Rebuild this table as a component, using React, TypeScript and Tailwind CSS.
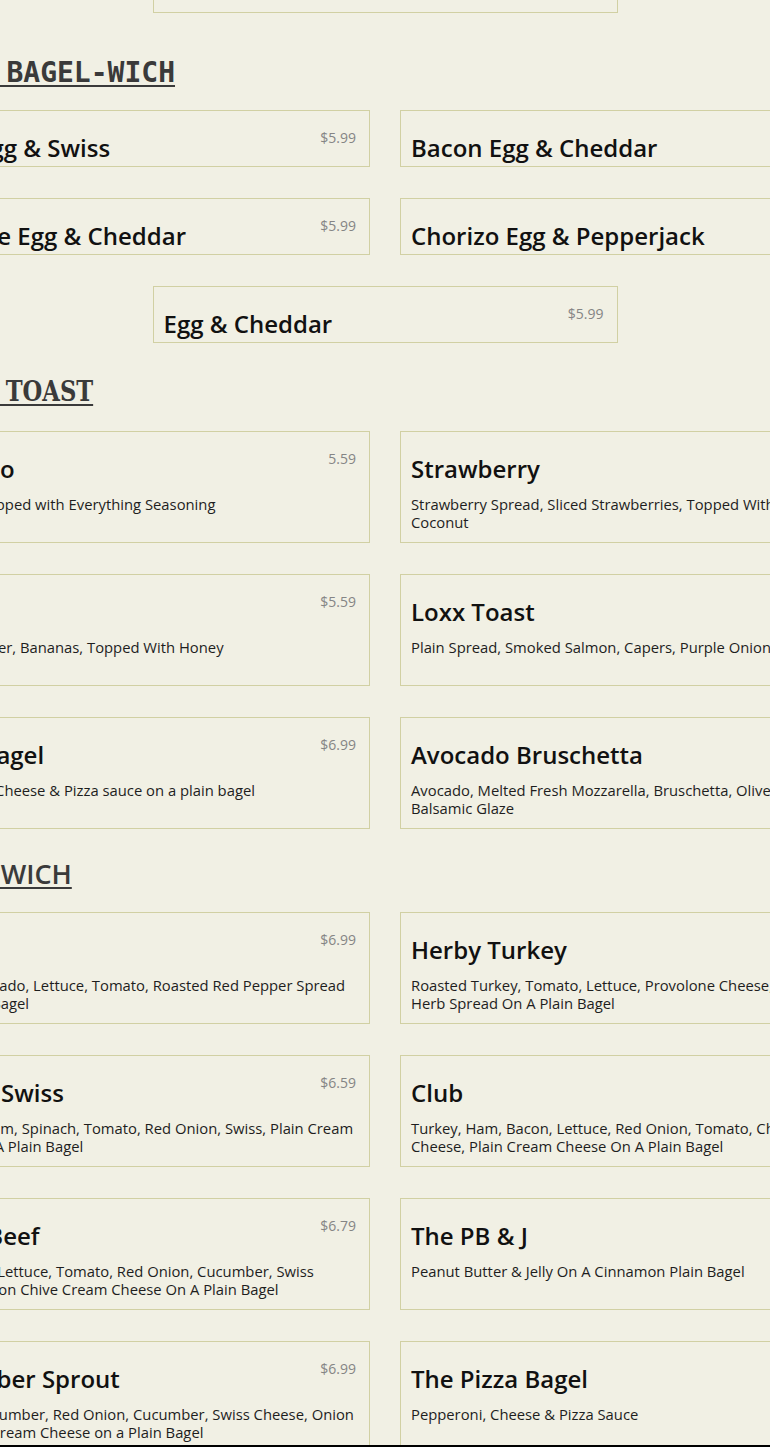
import React from "react";

type Item = { title: string; price?: string; desc?: string };

function Card({ item, tall, right }: { item: Item; tall: boolean; right?: boolean }) {
  return (
    <div
      className={
        "border border-[#d1d0a3] pl-[10px] pr-[13px] pt-[17px] " +
        (tall ? "h-[112px]" : "h-[57px]")
      }
    >
      <div className="flex items-start justify-between">
        <h3 className="mt-[4px] text-[24px] leading-[32px] font-semibold text-[#111111] whitespace-nowrap">
          {item.title}
        </h3>
        <span className="text-[14px] leading-[20px] text-[#858585]">{item.price}</span>
      </div>
      {item.desc && (
        <p
          className={
            "mt-[10px] text-[14.8px] leading-[18px] text-[#1e1e1e] " + (right ? "mr-[48px]" : "")
          }
        >
          {item.desc}
        </p>
      )}
    </div>
  );
}

const bagelwich: Item[] = [
  { title: "Ham Egg & Swiss", price: "$5.99" },
  { title: "Bacon Egg & Cheddar", price: "$5.99" },
  { title: "Sausage Egg & Cheddar", price: "$5.99" },
  { title: "Chorizo Egg & Pepperjack", price: "$6.49" },
];

const toast: Item[] = [
  { title: "Avocado", price: "5.59", desc: "Avocado Topped with Everything Seasoning" },
  {
    title: "Strawberry",
    price: "$5.59",
    desc: "Strawberry Spread, Sliced Strawberries, Topped With Coconut",
  },
  { title: "Elvis", price: "$5.59", desc: "Peanut Butter, Bananas, Topped With Honey" },
  {
    title: "Loxx Toast",
    price: "$8.99",
    desc: "Plain Spread, Smoked Salmon, Capers, Purple Onion",
  },
  { title: "Pizza Bagel", price: "$6.99", desc: "Pepperoni, Cheese & Pizza sauce on a plain bagel" },
  {
    title: "Avocado Bruschetta",
    price: "$7.49",
    desc: "Avocado, Melted Fresh Mozzarella, Bruschetta, Olive Oil, Balsamic Glaze",
  },
];

const sandwich: Item[] = [
  {
    title: "Veggie",
    price: "$6.99",
    desc: "Bacon, Avocado, Lettuce, Tomato, Roasted Red Pepper Spread On A Plain Bagel",
  },
  {
    title: "Herby Turkey",
    price: "$6.99",
    desc: "Roasted Turkey, Tomato, Lettuce, Provolone Cheese, Herb Spread On A Plain Bagel",
  },
  {
    title: "Ham & Swiss",
    price: "$6.59",
    desc: "Turkey & Ham, Spinach, Tomato, Red Onion, Swiss, Plain Cream Cheese On A Plain Bagel",
  },
  {
    title: "Club",
    price: "$7.49",
    desc: "Turkey, Ham, Bacon, Lettuce, Red Onion, Tomato, Chive Cheese, Plain Cream Cheese On A Plain Bagel",
  },
  {
    title: "Roast Beef",
    price: "$6.79",
    desc: "Roast Beef, Lettuce, Tomato, Red Onion, Cucumber, Swiss Cheese, Onion Chive Cream Cheese On A Plain Bagel",
  },
  {
    title: "The PB & J",
    price: "$4.99",
    desc: "Peanut Butter & Jelly On A Cinnamon Plain Bagel",
  },
  {
    title: "Cucumber Sprout",
    price: "$6.99",
    desc: "Sprouts Cucumber, Red Onion, Cucumber, Swiss Cheese, Onion Dills Chive Cream Cheese on a Plain Bagel",
  },
  { title: "The Pizza Bagel", price: "$6.99", desc: "Pepperoni, Cheese & Pizza Sauce" },
];

function Grid({ items, tall }: { items: Item[]; tall: boolean }) {
  return (
    <div className="grid grid-cols-2 gap-x-[30px] gap-y-[31px]">
      {items.map((it, i) => (
        <Card key={it.title} item={it} tall={tall} right={i % 2 === 1} />
      ))}
    </div>
  );
}

export default function App() {
  return (
    <div className="h-[1447px] w-full overflow-hidden bg-[#f1f0e4] flex flex-col font-['Open_Sans',sans-serif]">
      <div className="flex-1 overflow-hidden flex justify-center">
        <div className="w-[960px] shrink-0 -mt-[99px]">
          <div className="w-[465px] mx-auto">
            <Card
              item={{ title: "Veggie Egg", price: "$5.99", desc: "Egg, Spinach & Tomato" }}
              tall
            />
          </div>

          <h2 className="mt-[44px] ml-[34px] text-[28px] leading-[32px] font-bold text-[#3a3a3a] font-['DejaVu_Sans_Mono',monospace] underline decoration-[2px] underline-offset-[3px]">
            EGG BAGEL-WICH
          </h2>
          <div className="mt-[21px]">
            <Grid items={bagelwich} tall={false} />
          </div>
          <div className="mt-[31px] w-[465px] mx-auto">
            <Card item={{ title: "Egg & Cheddar", price: "$5.99" }} tall={false} />
          </div>

          <h2 className="mt-[33px] ml-0 origin-left scale-x-90 text-[28px] leading-[32px] font-bold text-[#3a3a3a] font-['DejaVu_Serif',serif] [font-stretch:condensed] underline decoration-[2px] underline-offset-[3px]">
            {"BAGEL\u2002TOAST"}
          </h2>
          <div className="mt-[23px]">
            <Grid items={toast} tall />
          </div>

          <h2 className="mt-[29px] ml-[22px] text-[27px] leading-[32px] font-semibold text-[#3a3a3a] underline decoration-[2px] underline-offset-[3px]">
            SANDWICH
          </h2>
          <div className="mt-[22px]">
            <Grid items={sandwich} tall />
          </div>
        </div>
      </div>
      <div className="h-[2px] shrink-0 bg-black" />
    </div>
  );
}
